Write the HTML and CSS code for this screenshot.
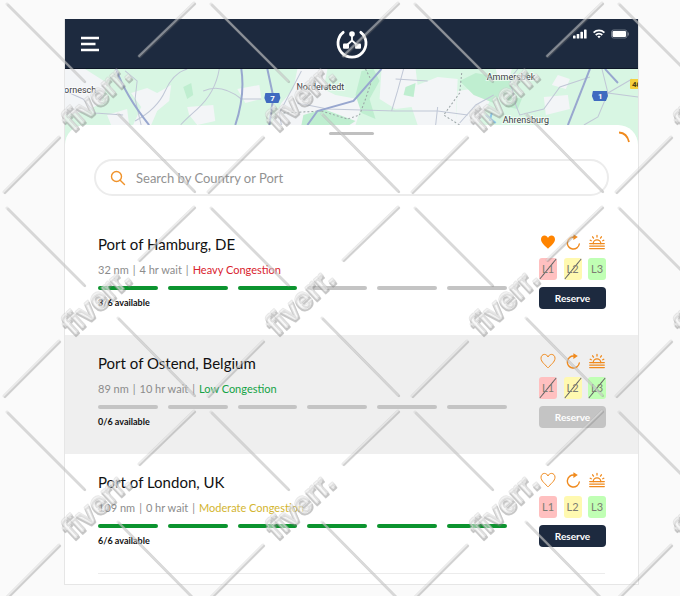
FILE: index.html
```html
<!DOCTYPE html>
<html lang="en">

<head>
    <meta charset="UTF-8">
    <meta name="viewport" content="width=device-width, initial-scale=1.0">
    <title>Find a Port</title>
    <link rel="stylesheet" href="styles.css">
</head>

<body>
    <!-- Shared icons -->
    <svg class="sprite" aria-hidden="true">
        <symbol id="icon-heart" viewBox="0 0 16 16">
            <path d="M8 14.8C5.6 12.2 1 9 1 5.2 1 3 2.600 1.400 4.500 1.400 6.200 1.400 7.400 2.500 8 4 8.600 2.500 9.800 1.400 11.500 1.400 13.400 1.400 15 3 15 5.200 15 9 10.400 12.200 8 14.800Z" />
        </symbol>
        <symbol id="icon-refresh" viewBox="0 0 16 16">
            <path d="M9 3.100A6 6 0 1 0 14.300 10" fill="none" stroke="currentColor" stroke-width="1.400" stroke-linecap="round" />
            <path d="M8.400 0.300L12.800 3.100L8.400 5.900Z" fill="currentColor" />
        </symbol>
        <symbol id="icon-sunrise" viewBox="0 0 16 16">
            <g fill="none" stroke="currentColor" stroke-width="1.300" stroke-linecap="round">
                <path d="M0.700 9.600H4.200A3.800 3.800 0 0 1 11.800 9.600H15.300" />
                <path d="M4.200 9.600H11.800M0.700 12.100H15.300M0.700 14.600H15.300" />
                <path d="M8 1.400V3M3.600 2.800L4.500 4.100M12.400 2.800L11.500 4.100M1.200 6.200L2.300 6.800M14.800 6.200L13.700 6.800" />
            </g>
        </symbol>
    </svg>

    <div class="app">
        <header class="header">
            <button class="menu-btn" aria-label="Menu">
                <svg width="18" height="16" viewBox="0 0 18 16">
                    <path d="M0 2H18M0 8H14.500M0 14H18" stroke="#fff" stroke-width="2.400" />
                </svg>
            </button>
            <svg class="logo" width="32" height="32" viewBox="0 0 32 32" role="img" aria-label="Logo">
                <path d="M7.200 4.300A14 14 0 1 0 24.800 4.300" fill="none" stroke="#fff" stroke-width="2.800" stroke-linecap="round" />
                <path d="M16 6V12.500L10 18M16 12.500L22 18" fill="none" stroke="#fff" stroke-width="1.800" />
                <circle cx="16" cy="6" r="2.800" fill="#fff" />
                <rect x="7" y="15.500" width="6" height="5.200" rx="1" fill="#fff" />
                <rect x="19" y="15.500" width="6" height="5.200" rx="1" fill="#fff" />
            </svg>
            <div class="status">
                <svg width="14" height="10" viewBox="0 0 14 10" fill="#fff">
                    <rect x="0" y="6.500" width="2.600" height="3" rx="0.600" />
                    <rect x="3.700" y="5" width="2.600" height="4.500" rx="0.600" />
                    <rect x="7.400" y="2.800" width="2.600" height="6.700" rx="0.600" />
                    <rect x="11" y="0.500" width="2.600" height="9" rx="0.600" />
                </svg>
                <svg width="12" height="10" viewBox="0 0 12 10" fill="none" stroke="#fff" stroke-width="1.700">
                    <path d="M0.600 3.600A7.800 7.800 0 0 1 11.400 3.600M2.700 6A4.900 4.900 0 0 1 9.300 6" />
                    <path d="M6 9.200L4.300 7.500A2.500 2.500 0 0 1 7.700 7.500Z" fill="#fff" stroke="none" />
                </svg>
                <svg width="18" height="10" viewBox="0 0 18 10">
                    <rect x="0.500" y="1" width="15.500" height="8" rx="2" fill="none" stroke="#6d7685" />
                    <rect x="1.500" y="2" width="13.500" height="6" rx="1" fill="#fff" />
                    <path d="M17.200 3.500V6.500" stroke="#8b929e" />
                </svg>
            </div>
        </header>

        <svg class="map" viewBox="0 0 572 76" preserveAspectRatio="xMidYMid slice" role="img" aria-label="Map of the Hamburg area">
            <rect width="572" height="76" fill="#d8f6e3" />
            <!-- built-up areas -->
            <g fill="#f3f5f7">
                <path d="M0 0H20L42 14 36 34 22 42 0 46Z" />
                <path d="M66 24L82 19 92 24 106 16 104 32 92 42 86 56H68L76 38Z" />
                <path d="M42 46L62 40 64 56H46Z" />
                <path d="M122 38L148 36 150 52 132 56 124 46Z" />
                <path d="M172 20L194 16 196 30 180 34Z" />
                <path d="M206 56L216 34 228 20 232 0H262L258 20 270 26 292 30 300 24 290 56Z" />
                <path d="M316 0H350L352 16 372 8 392 10 390 56H352L346 38 330 40 314 30Z" />
                <path d="M392 22L418 18 424 32 412 56H390Z" />
                <path d="M478 28L502 26 504 40 480 46Z" />
                <path d="M492 6L504 10 500 20 486 16Z" />
                <path d="M430 0H446L444 8H432Z" />
            </g>
            <!-- woods -->
            <g fill="#bfeed0">
                <path d="M296 2L308 0 314 12 304 30 310 50 296 44 290 26Z" />
                <path d="M394 12L410 4 442 10 450 18 434 26 428 34 408 26Z" />
                <path d="M238 46L258 40 290 52 284 56H236Z" />
                <path d="M118 18L126 14 128 26 122 30Z" />
                <path d="M340 18L350 14 348 28 338 26Z" />
                <path d="M442 26L456 30 452 40 440 38Z" />
            </g>
            <!-- small roads -->
            <g fill="none" stroke="#c0c7d6" stroke-width="1">
                <path d="M0 22L18 30 30 44 58 46" />
                <path d="M60 2L72 12 70 30 76 56" />
                <path d="M122 0Q108 4 100 22T70 52" />
                <path d="M154 0Q150 24 132 40T116 56" />
                <path d="M138 22Q156 14 176 30H196" />
                <path d="M236 2L214 44 216 56" />
                <path d="M232 34L262 40 330 42H372L402 46" />
                <path d="M338 0L332 22 326 42" />
                <path d="M330 10L362 12" />
                <path d="M372 38L370 56" />
                <path d="M452 0L444 10 450 36 454 46 478 40 494 18 524 8" />
                <path d="M428 26L410 36 394 54" />
                <path d="M536 0L542 24 572 28" />
                <path d="M542 24L532 48 518 56" />
                <path d="M542 24L566 10" />
            </g>
            <path d="M300 0L306 12 300 30 294 46M256 42L282 50 294 46M396 4L394 24 378 46 394 56M218 44L256 42" fill="none" stroke="#9aa4a6" stroke-dasharray="2 2" />
            <!-- motorways -->
            <g fill="none" stroke="#98a7cf" stroke-width="2">
                <path d="M51 0Q60 26 84 56" />
                <path d="M176 0Q180 26 170 56" />
                <path d="M202 0L208 28 204 56" />
                <path d="M316 0L288 32 252 42 242 56" />
                <path d="M524 0L502 56" />
                <path d="M539 0L552 14" />
            </g>
            <path d="M420 46L430 54M426 44L424 52" stroke="#8cc8e8" stroke-width="2" />
            <g class="road-sign">
                <path d="M200 24H214L215 29 213 34H201L199 29Z" fill="#3f6ac0" />
                <path d="M527 22H541L542 27 540 32H528L526 27Z" fill="#3f6ac0" />
                <rect x="564" y="10" width="16" height="10" rx="1" fill="#f4cf3c" />
                <text x="205" y="32">7</text>
                <text x="532" y="30">1</text>
                <text x="566" y="18" class="dark">40</text>
            </g>
            <g class="place">
                <text x="-1" y="24">ornesch</text>
                <text x="231" y="21">Norderstedt</text>
                <text x="421" y="11">Ammersbek</text>
                <text x="437" y="54">Ahrensburg</text>
            </g>
        </svg>

        <main class="sheet">
            <div class="handle"></div>
            <svg class="spinner" width="12" height="12" viewBox="0 0 12 12">
                <path d="M0 1.500Q8 2 10 11" fill="none" stroke="#f08a1d" stroke-width="1.800" />
            </svg>

            <label class="search">
                <svg width="16" height="16" viewBox="0 0 16 16" fill="none" stroke="#f0932b" stroke-width="1.400" stroke-linecap="round">
                    <circle cx="6.500" cy="6.500" r="5" />
                    <path d="M10.200 10.200L14.500 14.500" />
                </svg>
                <input type="search" placeholder="Search by Country or Port" aria-label="Search by Country or Port">
            </label>

            <ul class="ports">
                <li class="port">
                    <div class="port-info">
                        <h2>Port of Hamburg, DE</h2>
                        <p class="meta"><span>32 nm</span><span>|</span><span>4 hr wait</span><span>|</span><span class="heavy">Heavy Congestion</span></p>
                        <div class="berths">
                            <i class="free"></i><i class="free"></i><i class="free"></i><i></i><i></i><i></i>
                        </div>
                        <p class="available">3/6 available</p>
                    </div>
                    <div class="port-actions">
                        <div class="icons">
                            <button class="icon-btn saved" aria-label="Remove from favourites"><svg><use href="#icon-heart" /></svg></button>
                            <button class="icon-btn" aria-label="Refresh"><svg><use href="#icon-refresh" /></svg></button>
                            <button class="icon-btn" aria-label="Daylight hours"><svg><use href="#icon-sunrise" /></svg></button>
                        </div>
                        <div class="levels">
                            <span class="level l1 off">L1</span>
                            <span class="level l2 off">L2</span>
                            <span class="level l3">L3</span>
                        </div>
                        <button class="reserve">Reserve</button>
                    </div>
                </li>

                <li class="port full">
                    <div class="port-info">
                        <h2>Port of Ostend, Belgium</h2>
                        <p class="meta"><span>89 nm</span><span>|</span><span>10 hr wait</span><span>|</span><span class="low">Low Congestion</span></p>
                        <div class="berths">
                            <i></i><i></i><i></i><i></i><i></i><i></i>
                        </div>
                        <p class="available">0/6 available</p>
                    </div>
                    <div class="port-actions">
                        <div class="icons">
                            <button class="icon-btn heart" aria-label="Add to favourites"><svg><use href="#icon-heart" /></svg></button>
                            <button class="icon-btn" aria-label="Refresh"><svg><use href="#icon-refresh" /></svg></button>
                            <button class="icon-btn" aria-label="Daylight hours"><svg><use href="#icon-sunrise" /></svg></button>
                        </div>
                        <div class="levels">
                            <span class="level l1 off">L1</span>
                            <span class="level l2 off">L2</span>
                            <span class="level l3 off">L3</span>
                        </div>
                        <button class="reserve" disabled>Reserve</button>
                    </div>
                </li>

                <li class="port">
                    <div class="port-info">
                        <h2>Port of London, UK</h2>
                        <p class="meta"><span>109 nm</span><span>|</span><span>0 hr wait</span><span>|</span><span class="moderate">Moderate Congestion</span></p>
                        <div class="berths">
                            <i class="free"></i><i class="free"></i><i class="free"></i><i class="free"></i><i class="free"></i><i class="free"></i>
                        </div>
                        <p class="available">6/6 available</p>
                    </div>
                    <div class="port-actions">
                        <div class="icons">
                            <button class="icon-btn heart" aria-label="Add to favourites"><svg><use href="#icon-heart" /></svg></button>
                            <button class="icon-btn" aria-label="Refresh"><svg><use href="#icon-refresh" /></svg></button>
                            <button class="icon-btn" aria-label="Daylight hours"><svg><use href="#icon-sunrise" /></svg></button>
                        </div>
                        <div class="levels">
                            <span class="level l1">L1</span>
                            <span class="level l2">L2</span>
                            <span class="level l3">L3</span>
                        </div>
                        <button class="reserve">Reserve</button>
                    </div>
                </li>
            </ul>
            <hr>
        </main>
    </div>

    <!-- Repeating watermark over the whole page -->
    <svg class="watermark" aria-hidden="true">
        <defs>
            <path id="wm-lines" d="M7 4L84 81M194 3L139 56M59 137L4 192M118 114L194 191" />
            <pattern id="wm" width="204" height="204" patternUnits="userSpaceOnUse">
                <g fill="none" stroke-linecap="round">
                    <use href="#wm-lines" x="1" y="1" stroke="#777" stroke-opacity="0.300" stroke-width="2.400" />
                    <use href="#wm-lines" stroke="#999" stroke-opacity="0.250" stroke-width="3" />
                    <use href="#wm-lines" stroke="#fff" stroke-opacity="0.350" stroke-width="1.800" />
                </g>
                <g class="wm-word">
                    <text class="shade" transform="translate(74 134) rotate(-43)">fiverr.</text>
                    <text class="face" transform="translate(73 132) rotate(-43)">fiverr.</text>
                </g>
            </pattern>
        </defs>
        <rect width="100%" height="100%" fill="url(#wm)" />
    </svg>
</body>

</html>
```
FILE: styles.css
```css
:root {
    --navy: #1d2a3f;
    --orange: #f08a1d;
    --green: #0c942f;
    --grey: #c4c4c4;
    --muted: #8c8c8c;
}

* {
    margin: 0;
    padding: 0;
    box-sizing: border-box;
}

body {
    position: relative;
    min-height: 100vh;
    padding: 19px 41px 11px 64px;
    background: #fafafa;
    color: #111;
    font-family: Lato, "Liberation Sans", sans-serif;
}

button {
    border: none;
    background: none;
    font: inherit;
    cursor: pointer;
}

.sprite {
    display: none;
}

.app {
    background: #fff;
    border: 1px solid #e6e6e6;
    border-top: none;
}

.header {
    display: grid;
    grid-template-columns: 1fr auto 1fr;
    align-items: center;
    height: 50px;
    background: var(--navy);
    border-bottom: 1px solid #0d1626;
}

.menu-btn {
    justify-self: start;
    margin-left: 16px;
}

.menu-btn svg,
.logo {
    display: block;
}

.status {
    display: flex;
    align-self: start;
    justify-self: end;
    gap: 6px;
    margin: 10px 9px 0 0;
}

.map {
    display: block;
    width: 100%;
    height: 76px;
}

.place {
    font: 9px Roboto, sans-serif;
    fill: #3c4043;
    stroke: #fff;
    stroke-width: 2px;
    stroke-opacity: 0.6;
    paint-order: stroke;
}

.road-sign {
    font: bold 8px Roboto, sans-serif;
    fill: #fff;
}

.road-sign .dark {
    fill: #4a3f10;
}

/* Bottom sheet */
.sheet {
    position: relative;
    margin-top: -20px;
    padding: 7px 0 10px;
    background: #fff;
    border-radius: 20px 20px 0 0;
}

.handle {
    width: 45px;
    height: 3px;
    margin: 0 auto 24px;
    border-radius: 2px;
    background: #c0c0c0;
}

.spinner {
    position: absolute;
    top: 6px;
    right: 7px;
}

.search {
    display: flex;
    align-items: center;
    gap: 10px;
    height: 37px;
    margin: 0 29px 20px;
    padding: 0 14px;
    border: 2px solid #ececec;
    border-radius: 19px;
}

.search input {
    flex: 1;
    border: none;
    outline: none;
    background: none;
    font: 13px Lato, sans-serif;
}

.search input::placeholder {
    color: #929292;
}

.ports {
    list-style: none;
}

.port {
    display: flex;
    gap: 32px;
    padding: 18px 32px 25px 33px;
}

.port.full {
    background: #efefef;
}

.port-info {
    flex: 1;
}

.port h2 {
    margin-bottom: 8px;
    font-size: 15px;
    font-weight: 400;
    line-height: 20px;
}

.meta {
    display: flex;
    gap: 4px;
    margin-bottom: 8px;
    color: var(--muted);
    font-size: 11px;
    line-height: 16px;
}

.heavy {
    color: #d9232e;
}

.low {
    color: #14a345;
}

.moderate {
    color: #d3b52f;
}

.berths {
    display: grid;
    grid-template-columns: repeat(6, 1fr);
    gap: 10px;
    margin-bottom: 6px;
}

.berths i {
    height: 4px;
    border-radius: 2px;
    background: var(--grey);
}

.berths .free {
    background: var(--green);
}

.available {
    font-size: 9px;
    font-weight: 700;
    line-height: 14px;
}

.port-actions {
    display: flex;
    flex-direction: column;
    width: 67px;
}

.icons,
.levels {
    display: flex;
    justify-content: space-between;
}

.icons {
    margin-bottom: 8px;
}

.levels {
    margin-bottom: 7px;
}

.icon-btn {
    width: 18px;
    height: 16px;
    color: var(--orange);
}

.icon-btn svg {
    display: block;
    width: 16px;
    height: 16px;
    margin: 0 auto;
    fill: none;
}

.icon-btn.heart svg {
    stroke: currentColor;
}

.icon-btn.saved svg {
    fill: #ff8400;
}

.level {
    width: 18px;
    height: 22px;
    border-radius: 3px;
    color: #7d7d73;
    font-size: 11px;
    line-height: 22px;
    text-align: center;
}

.l1 {
    background-color: #ffc0c0;
}

.l2 {
    background-color: #fff9b0;
}

.l3 {
    background-color: #c0ffb4;
}

/* corner to corner strike */
.level.off {
    background-image: linear-gradient(to bottom right, transparent calc(50% - 1px), #666 50%, transparent calc(50% + 1px));
}

.reserve {
    height: 22px;
    border-radius: 4px;
    background: var(--navy);
    color: #fff;
    font-size: 10px;
    font-weight: 700;
    line-height: 22px;
}

.reserve:disabled {
    background: var(--grey);
    cursor: default;
}

hr {
    margin: 0 33px;
    border: none;
    border-top: 1px solid #ececec;
}

.watermark {
    position: absolute;
    top: 0;
    left: 0;
    width: 100%;
    height: 100%;
    pointer-events: none;
}

.wm-word {
    font: bold 30px "Liberation Sans", sans-serif;
    stroke-width: 2px;
    stroke-linejoin: round;
    paint-order: stroke;
}

.wm-word .shade {
    fill: #888;
    fill-opacity: 0.1;
    stroke: #777;
    stroke-opacity: 0.4;
}

.wm-word .face {
    fill: #fff;
    fill-opacity: 0.45;
    stroke: #ccc;
    stroke-opacity: 0.45;
}
```
